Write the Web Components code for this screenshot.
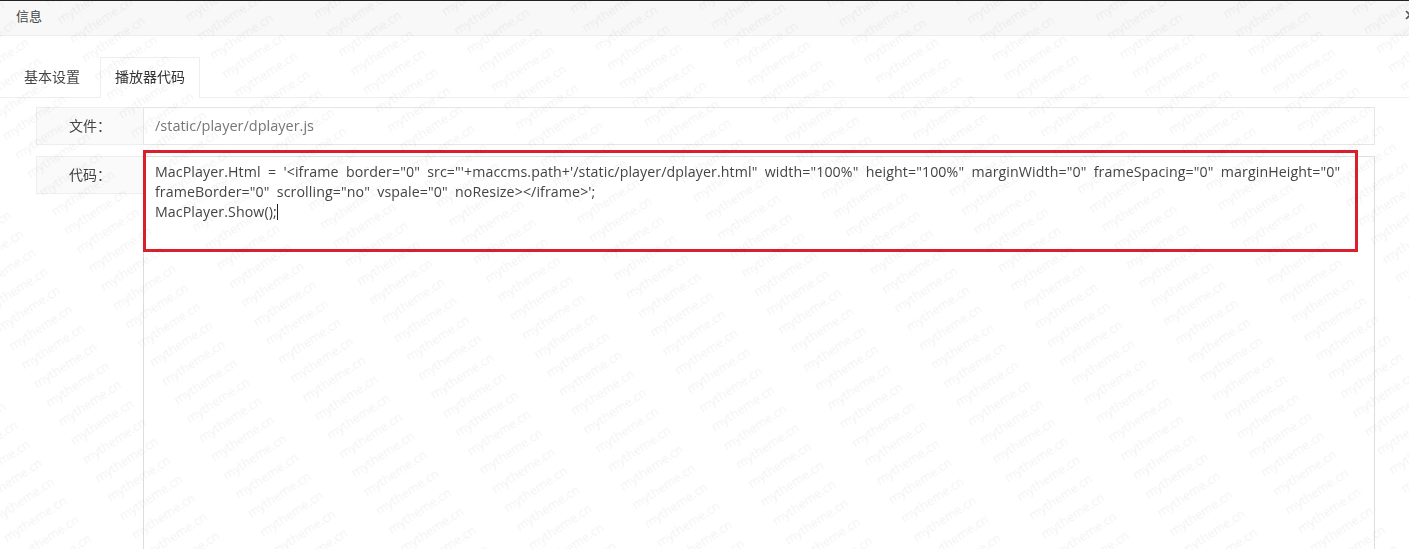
<!DOCTYPE html>
<html lang="zh">
<head>
<meta charset="utf-8">
<title>信息</title>
<style>
    html, body { margin: 0; height: 100%; overflow: hidden; background: #fff; }
    body { font: 14px "Open Sans", "Noto Sans CJK SC", sans-serif; color: #555; }
</style>
</head>
<body>
<info-dialog>
    <dialog-title slot="title">信息</dialog-title>
    <tab-bar slot="tabs">
        <tab-item>基本设置</tab-item>
        <tab-item active>播放器代码</tab-item>
    </tab-bar>
    <form-row label="文件：">/static/player/dplayer.js</form-row>
    <form-row label="代码：" tall>
        <code-box>MacPlayer.Html = '&lt;iframe border="0" src="'+maccms.path+'/static/player/dplayer.html" width="100%" height="100%" marginWidth="0" frameSpacing="0" marginHeight="0" frameBorder="0" scrolling="no" vspale="0" noResize&gt;&lt;/iframe&gt;';<br>MacPlayer.Show();</code-box>
    </form-row>
</info-dialog>
<script>
class InfoDialog extends HTMLElement {
    constructor() {
        super();
        this.attachShadow({ mode: 'open' }).innerHTML = `
            <style>
                :host { display: block; position: relative; height: 549px; overflow: hidden; border-top: 1px solid #222; box-sizing: border-box; filter: blur(.35px); }
                .body { display: flex; flex-direction: column; gap: 11px; padding: 9px 34px 0 36px; }
                svg { position: absolute; inset: 0; width: 100%; height: 100%; pointer-events: none; }
                text { font: 12.5px "Open Sans", sans-serif; fill: #000; fill-opacity: .05; }
            </style>
            <slot name="title"></slot>
            <slot name="tabs"></slot>
            <div class="body"><slot></slot></div>
            <svg>
                <defs>
                    <pattern id="wm" width="109" height="22.5" patternUnits="userSpaceOnUse" patternTransform="translate(550 377) rotate(-33) translate(0 -15)">
                        <text x="0" y="15">mytheme.cn</text>
                    </pattern>
                </defs>
                <rect width="100%" height="100%" fill="url(#wm)"></rect>
            </svg>
        `;
    }
}
customElements.define('info-dialog', InfoDialog);

class DialogTitle extends HTMLElement {
    constructor() {
        super();
        this.attachShadow({ mode: 'open' }).innerHTML = `
            <style>
                :host { display: flex; align-items: center; justify-content: space-between; box-sizing: content-box; height: 28px; padding: 0 0 6px 16px; background: #f8f8f8; border-bottom: 1px solid #eee; font-size: 13px; color: #444; }
                svg { width: 10px; height: 10px; margin: 0 -6px 0 0; flex: none; }
            </style>
            <slot></slot>
            <svg viewBox="0 0 10 10"><path d="M1 1l8 8M9 1l-8 8" stroke="#555" stroke-width="1.6" fill="none"/></svg>
        `;
    }
}
customElements.define('dialog-title', DialogTitle);

class TabBar extends HTMLElement {
    constructor() {
        super();
        this.attachShadow({ mode: 'open' }).innerHTML = `
            <style>
                :host { display: flex; gap: 5px; height: 40px; margin-top: 21px; padding-left: 9px; border-bottom: 1px solid #eee; }
            </style>
            <slot></slot>
        `;
    }
}
customElements.define('tab-bar', TabBar);

class TabItem extends HTMLElement {
    constructor() {
        super();
        this.attachShadow({ mode: 'open' }).innerHTML = `
            <style>
                :host { display: block; box-sizing: border-box; height: 41px; padding: 0 14px; line-height: 38px; font-size: 14px; color: #444; border: 1px solid transparent; border-bottom: 0; }
                :host([active]) { background: #fff; border-color: #eee; color: #333; }
            </style>
            <slot></slot>
        `;
    }
}
customElements.define('tab-item', TabItem);

class FormRow extends HTMLElement {
    constructor() {
        super();
        this.attachShadow({ mode: 'open' }).innerHTML = `
            <style>
                :host { display: flex; height: 38px; font-size: 14.5px; }
                :host([tall]) { height: 600px; }
                .label { flex: none; box-sizing: border-box; width: 107px; height: 38px; padding-right: 32px; line-height: 36px; text-align: right; font-size: 14px; color: #444; background: #fafafa; border: 1px solid #eee; border-right: 0; }
                .value { flex: 1; box-sizing: border-box; padding: 0 11px; line-height: 36px; color: #777; border: 1px solid #e6e6e6; }
                :host([tall]) .value { padding: 0; border-color: #ddd; }
            </style>
            <div class="label"></div>
            <div class="value"><slot></slot></div>
        `;
        this.shadowRoot.querySelector('.label').textContent = this.getAttribute('label');
    }
}
customElements.define('form-row', FormRow);

class CodeBox extends HTMLElement {
    constructor() {
        super();
        this.attachShadow({ mode: 'open' }).innerHTML = `
            <style>
                :host { display: block; position: relative; padding: 5px 11px; line-height: 20px; color: #444; font-size: 14.2px; word-spacing: 3.5px; letter-spacing: .1px; }
                .mark { position: absolute; left: -1px; top: -7px; width: 1215px; height: 102px; box-sizing: border-box; border: 3px solid #d9202c; }
                .caret { display: inline-block; width: 1px; height: 16px; background: #222; vertical-align: -3px; }
            </style>
            <slot></slot><span class="caret"></span>
            <div class="mark"></div>
        `;
    }
}
customElements.define('code-box', CodeBox);
</script>
</body>
</html>
